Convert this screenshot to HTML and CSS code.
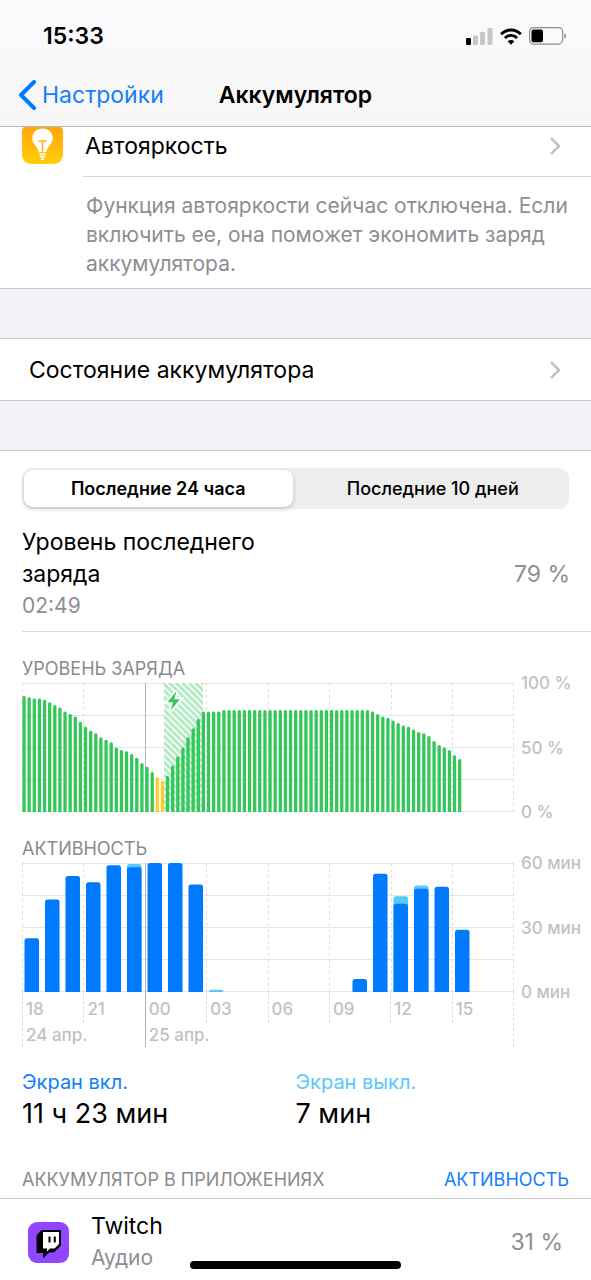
FILE: index.html
```html
<!DOCTYPE html>
<html lang="ru">
<head>
<meta charset="utf-8">
<meta name="viewport" content="width=device-width, initial-scale=1">
<title>Аккумулятор</title>
<link rel="stylesheet" href="styles.css">
</head>
<body>
<header class="header">
  <div class="status">
    <time class="clock">15:33</time>
    <div class="indicators">
      <svg class="signal" viewBox="0 0 27 17" aria-hidden="true">
        <rect x="0" y="10" width="5" height="7" rx="1.3" fill="#000"/>
        <rect x="7" y="7.500" width="5" height="9.500" rx="1.300" fill="#c7c7c9"/>
        <rect x="14" y="4" width="5" height="13" rx="1.300" fill="#c7c7c9"/>
        <rect x="21.500" y="0" width="5" height="17" rx="1.300" fill="#c7c7c9"/>
      </svg>
      <svg class="wifi" viewBox="0 0 22 17" aria-hidden="true">
        <path d="M1.200 6.200C6.500.6 15.500.6 20.800 6.200" fill="none" stroke="#000" stroke-width="3"/>
        <path d="M4.900 9.900C8.200 6.600 13.800 6.600 17.100 9.900" fill="none" stroke="#000" stroke-width="2.800"/>
        <path d="M11 16.700L7.600 13.200C9.500 11.500 12.500 11.500 14.400 13.200Z" fill="#000"/>
      </svg>
      <svg class="battery" viewBox="0 0 38 18" aria-hidden="true">
        <rect x=".6" y=".6" width="33" height="16.500" rx="4" fill="none" stroke="#8e8e90" stroke-width="1.200"/>
        <rect x="2.500" y="2.500" width="11.500" height="12.700" rx="2" fill="#000"/>
        <path d="M35.300 6.300C37.800 7.300 37.800 10.500 35.300 11.500Z" fill="#8e8e90"/>
      </svg>
    </div>
  </div>
  <nav class="nav">
    <a class="back" href="#">
      <svg class="back-icon" viewBox="0 0 18 30" aria-hidden="true"><path d="M16 2L3 15L16 28" fill="none" stroke="#007aff" stroke-width="4" stroke-linecap="round" stroke-linejoin="round"/></svg>
      <span>Настройки</span>
    </a>
    <h1 class="title">Аккумулятор</h1>
  </nav>
</header>

<main class="content">
  <section class="group">
    <a class="row suggestion" href="#">
      <svg class="app-icon" viewBox="0 0 41 41" aria-hidden="true">
        <defs><linearGradient id="amber" x1="0" y1="0" x2="0" y2="1"><stop offset="0" stop-color="#ff9f0a"/><stop offset="1" stop-color="#ffd00a"/></linearGradient></defs>
        <rect width="41" height="41" rx="9" fill="url(#amber)"/>
        <path d="M20.500 5.500C14.500 5.500 10.300 9.800 10.300 15.200C10.300 20.800 15.500 22.800 16.800 29H24.200C25.500 22.800 30.700 20.800 30.700 15.200C30.700 9.800 26.500 5.500 20.500 5.500Z" fill="#fff"/>
        <path d="M16.200 18H24.800M20.500 18V28.500" stroke="#ffb60a" stroke-width="1.500" fill="none"/>
        <path d="M17.200 31H23.800M17.600 33.700H23.400M19 36.200H22" stroke="#fff" stroke-width="1.700" fill="none"/>
      </svg>
      <span class="suggestion-body">
        <span class="row-text">Автояркость</span>
        <svg class="chevron" viewBox="0 0 12 20" aria-hidden="true"><path d="M2 2L10 10L2 18"/></svg>
      </span>
    </a>
    <p class="note">Функция автояркости сейчас отключена. Если включить ее, она поможет экономить заряд аккумулятора.</p>
  </section>

  <section class="group">
    <a class="row health" href="#">
      <span class="row-text">Состояние аккумулятора</span>
      <svg class="chevron" viewBox="0 0 12 20" aria-hidden="true"><path d="M2 2L10 10L2 18"/></svg>
    </a>
  </section>

  <section class="group usage">
    <div class="segments">
      <button class="segment segment-on" type="button" aria-pressed="true">Последние 24 часа</button>
      <button class="segment" type="button" aria-pressed="false">Последние 10 дней</button>
    </div>

    <div class="last-charge">
      <div class="last-text">
        <p class="last-title">Уровень последнего заряда</p>
        <time class="secondary">02:49</time>
      </div>
      <span class="value">79 %</span>
    </div>

    <h2 class="caption chart-caption">УРОВЕНЬ ЗАРЯДА</h2>
    <div class="chart">
      <svg class="plot" id="level" viewBox="0 0 492 129" preserveAspectRatio="none" role="img" aria-label="Уровень заряда"></svg>
      <div class="scale"><span>100 %</span><span>50 %</span><span>0 %</span></div>
    </div>

    <h2 class="caption chart-caption">АКТИВНОСТЬ</h2>
    <div class="chart">
      <svg class="plot" id="activity" viewBox="0 0 492 129" preserveAspectRatio="none" role="img" aria-label="Активность"></svg>
      <div class="scale"><span>60 мин</span><span>30 мин</span><span>0 мин</span></div>
      <div class="axis">
        <span class="hour">18</span><span class="hour">21</span><span class="hour midnight">00</span><span class="hour">03</span><span class="hour">06</span><span class="hour">09</span><span class="hour">12</span><span class="hour">15</span>
        <span class="day">24 апр.</span><span class="day today midnight">25 апр.</span>
      </div>
    </div>

    <dl class="totals">
      <div class="total"><dt class="on">Экран вкл.</dt><dd>11 ч 23 мин</dd></div>
      <div class="total"><dt class="off">Экран выкл.</dt><dd>7 мин</dd></div>
    </dl>

    <div class="apps-head">
      <h2 class="caption">АККУМУЛЯТОР В ПРИЛОЖЕНИЯХ</h2>
      <button class="toggle" type="button">АКТИВНОСТЬ</button>
    </div>
    <div class="app">
      <svg class="app-icon" viewBox="0 0 41 41" aria-hidden="true">
        <rect width="41" height="41" rx="9" fill="#9146ff"/>
        <path d="M13.500 8H33V23.500L26 30.500H21L15 36.500V31H8.500V13.500Z" fill="#000"/>
        <path d="M15 10H31V22L26.500 26.500H22L19 29.500V26.500H15Z" fill="#fff"/>
        <path d="M21.500 14.500V20.500M26.800 14.500V20.500" stroke="#000" stroke-width="2"/>
      </svg>
      <div class="app-text">
        <span class="row-text">Twitch</span>
        <span class="secondary">Аудио</span>
      </div>
      <span class="value">31 %</span>
    </div>
  </section>
</main>
<div class="home"></div>
<script src="charts.js"></script>
</body>
</html>
```
FILE: styles.css
```css
* { box-sizing: border-box; }

body {
  margin: 0;
  background: #fff;
  color: #000;
  font-family: Inter, "Noto Sans", sans-serif;
  font-size: 23px;
  line-height: 32px;
}

h1, h2, p, dl, dd { margin: 0; font-weight: 400; }
a { color: inherit; text-decoration: none; }
button { font: inherit; border: 0; padding: 0; background: none; color: inherit; }

.header {
  position: fixed;
  top: 0;
  left: 0;
  right: 0;
  z-index: 2;
  background: linear-gradient(#fbfbfd, #f6f6f7);
  border-bottom: 1px solid #b9b9bb;
}
.status {
  display: flex;
  align-items: center;
  justify-content: space-between;
  height: 64px;
  padding: 8px 24px 0 43px;
}
.clock { font-weight: 600; }
.indicators { display: flex; align-items: center; gap: 7px; }
.signal { width: 27px; height: 17px; }
.wifi { width: 22px; height: 17px; }
.battery { width: 38px; height: 18px; }

.nav {
  display: grid;
  grid-template-columns: 1fr auto 1fr;
  align-items: center;
  height: 62px;
  padding: 0 18px;
}
.back { display: flex; align-items: center; gap: 6px; color: #147efb; }
.back-icon { width: 18px; height: 30px; }
.title { font-size: 23px; font-weight: 600; }

.content { padding-top: 116px; }
.group { border-bottom: 1px solid #c8c8cc; }
.group + .group {
  border-top: 49px solid #f2f1f7;
  padding-top: 1px;
  box-shadow: inset 0 1px #c8c8cc;
}

.row { display: flex; align-items: center; height: 61px; }
.row-text { flex: 1; }
.suggestion { padding-left: 22px; gap: 20px; }
.suggestion .app-icon { margin-bottom: 6px; }
.suggestion-body {
  display: flex;
  flex: 1;
  align-items: center;
  align-self: stretch;
  padding: 0 30px 0 2px;
  border-bottom: 1px solid #d4d4d6;
}
.app-icon { width: 41px; height: 41px; flex: none; }
.chevron { width: 12px; height: 20px; flex: none; fill: none; stroke: #c4c4c7; stroke-width: 2.5; }
.note { padding: 14px 16px 10px 86px; font-size: 21px; line-height: 29px; color: #8e8e93; }
.health { padding: 0 30px 0 29px; }

.group.usage { padding-top: 18px; border-bottom: 0; }
.segments {
  display: flex;
  gap: 6px;
  height: 41px;
  margin: 0 22px;
  padding: 2px;
  border-radius: 11px;
  background: #eeeeef;
}
.segment { flex: 1; border-radius: 9px; font-size: 18px; font-weight: 500; }
.segment-on { background: #fff; font-weight: 600; box-shadow: 0 2px 5px #0000002e; }

.last-charge {
  display: flex;
  align-items: center;
  justify-content: space-between;
  margin-left: 22px;
  padding: 17px 21px 9px 0;
  border-bottom: 1px solid #dcdcde;
}
.last-text { max-width: 260px; }
.secondary { display: block; font-size: 21px; color: #8e8e93; }
.value { color: #8e8e93; }

.caption { font-size: 18px; line-height: 24px; color: #8a8a8e; }
.chart-caption { padding: 25px 22px 2px; }
.chart { display: grid; grid-template-columns: 1fr 77px; padding-left: 22px; }
.plot { display: block; width: 100%; height: 129px; }
.scale {
  display: flex;
  flex-direction: column;
  justify-content: space-between;
  margin: -12px 0;
  padding-left: 7px;
  font-size: 17px;
  font-weight: 500;
  line-height: 24px;
  color: #c1c1c4;
}
.axis {
  display: grid;
  grid-template-columns: repeat(8, 1fr);
  border-right: 1px dashed #dedee0;
  font-size: 17px;
  font-weight: 500;
  line-height: 24px;
  color: #c1c1c4;
}
.hour, .day { padding-left: 3px; border-left: 1px dashed #dedee0; }
.hour { padding-top: 5px; padding-bottom: 2px; }
.day { grid-column: span 2; }
.today { grid-column: span 6; }
.hour.midnight, .day.midnight { border-left: 1px solid #b4b4b7; }

.totals { display: flex; padding: 19px 22px 0; }
.total { flex: 1; }
.total dt { font-size: 20px; }
.total dd { font-size: 27px; }
.on { color: #147efb; }
.off { color: #5ac8fa; }

.apps-head {
  display: flex;
  align-items: center;
  justify-content: space-between;
  padding: 38px 22px 6px;
  border-bottom: 1px solid #c8c8cc;
}
.toggle { font-size: 18px; line-height: 24px; color: #147efb; }
.app { display: flex; align-items: center; gap: 22px; padding: 11px 28px 6px; }
.app-text { display: flex; flex: 1; flex-direction: column; }

.home {
  position: fixed;
  z-index: 3;
  left: 50%;
  bottom: 11px;
  width: 211px;
  height: 8px;
  margin-left: -106px;
  border-radius: 4px;
  background: #000;
}
```
FILE: charts.js
```javascript
const WIDTH = 492;
const HEIGHT = 129;

const levels = [
  90, 89, 88, 88, 87, 85, 83, 81, 78, 76, 74, 70, 66, 63, 61, 58, 56, 54, 50, 48, 47, 45, 42, 38, 35, 31, 27, 24,
  28, 36, 43, 50, 58, 65, 72, 78, 78, 78, 78,
  ...Array(29).fill(79),
  78, 76, 74, 73, 71, 69, 67, 66, 64, 62, 61, 59, 55, 52, 50, 48, 44, 41
];

// [total minutes, minutes with the screen on] for each hour
const minutes = [
  [25, 25], [43, 43], [54, 54], [51, 51], [59, 59], [59.5, 58], [60, 60], [60, 60], [50, 50], [1, 0],
  [0, 0], [0, 0], [0, 0], [0, 0], [0, 0], [0, 0],
  [6, 6], [55, 55], [44.5, 41], [49.5, 48], [49, 49], [29, 29]
];

function grid() {
  let out = '';
  for (let i = 0; i <= 4; i++) {
    const y = 0.5 + i * (HEIGHT - 1) / 4;
    out += `<path d="M0 ${y}H${WIDTH}" stroke="#e5e5e7"/>`;
  }
  for (let i = 0; i <= 8; i++) {
    const x = Math.min(WIDTH - 0.5, Math.floor(i * WIDTH / 8) + 0.5);
    const style = i === 2 ? 'stroke="#b4b4b7"' : 'stroke="#dedee0" stroke-dasharray="3 3"';
    out += `<path d="M${x} 0V${HEIGHT}" ${style}/>`;
  }
  return out;
}

function column(x, width, value, max, radius, color) {
  const h = value / max * HEIGHT;
  const r = Math.min(radius, h);
  return `<path d="M${x} ${HEIGHT}v${r - h}q0 ${-r} ${r} ${-r}h${width - 2 * r}q${r} 0 ${r} ${r}v${h - r}z" fill="${color}"/>`;
}

let level = '<defs><pattern id="hatch" width="6" height="4.6" patternUnits="userSpaceOnUse" patternTransform="rotate(45)">' +
  '<rect width="6" height="3" fill="#b5e9c3"/></pattern></defs>' + grid() +
  '<rect x="142" width="39" height="129" fill="#fff"/><rect x="142" width="39" height="129" fill="url(#hatch)"/>';
levels.forEach((value, i) => {
  level += column(0.4 + i * WIDTH / 96, 3.3, value, 100, 1.5, value < 28 ? '#ffcc2f' : '#34c759');
});
level += '<path d="M154.500 8L145.500 19.200H151L148.500 27.500L158 16.300H152.300Z" fill="#34c759" stroke="#fff" stroke-width="4" paint-order="stroke"/>';
document.getElementById('level').innerHTML = level;

let activity = grid();
minutes.forEach(([total, screen], i) => {
  const x = 2.5 + i * WIDTH / 24;
  if (total > screen) activity += column(x, 14.5, total, 60, 2.5, '#5ac8fa');
  if (screen) activity += column(x, 14.5, screen, 60, 2.5, '#007aff');
});
document.getElementById('activity').innerHTML = activity;
```
